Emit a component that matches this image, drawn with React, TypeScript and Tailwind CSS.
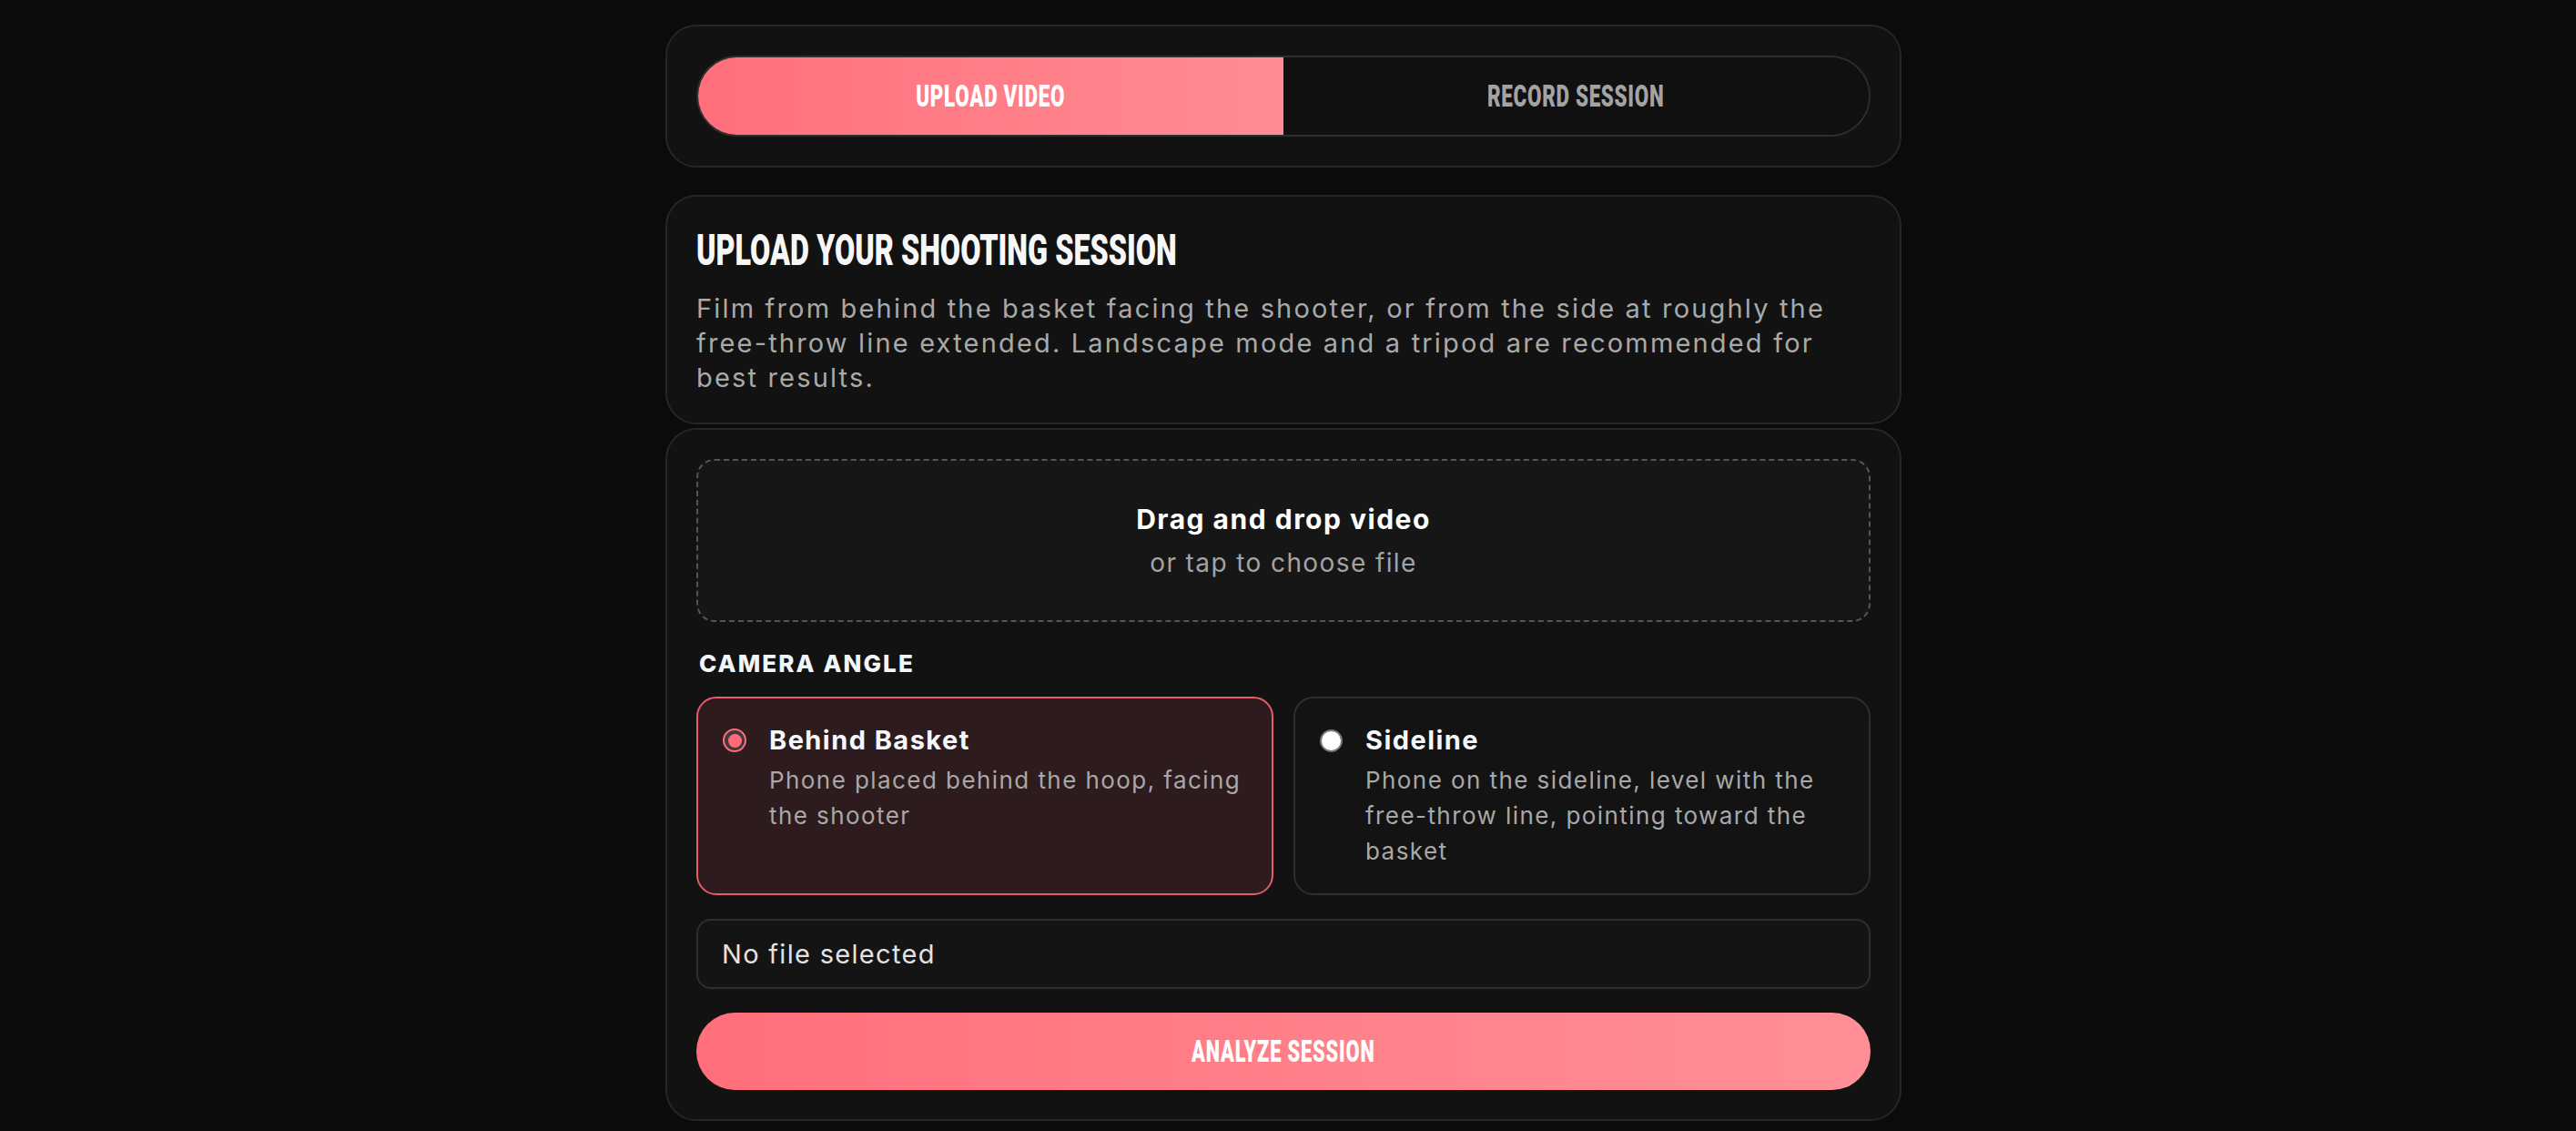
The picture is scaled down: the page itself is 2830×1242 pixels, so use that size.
import React, { useState } from "react";

type Angle = "behind" | "sideline";

const display = "font-['Roboto',sans-serif] font-black uppercase inline-block scale-x-[0.66]";
const body = "font-['Inter','Noto_Sans',sans-serif]";

const angles: { id: Angle; title: string; desc: string }[] = [
  {
    id: "behind",
    title: "Behind Basket",
    desc: "Phone placed behind the hoop, facing the shooter",
  },
  {
    id: "sideline",
    title: "Sideline",
    desc: "Phone on the sideline, level with the free-throw line, pointing toward the basket",
  },
];

const Radio: React.FC<{ checked: boolean }> = ({ checked }) =>
  checked ? (
    <span className="flex h-[26px] w-[26px] shrink-0 items-center justify-center rounded-full border-2 border-[#ff6b7a] bg-[#3a3a3a]">
      <span className="h-[15px] w-[15px] rounded-full bg-[#ff6b7a]" />
    </span>
  ) : (
    <span className="h-[25px] w-[25px] shrink-0 rounded-full border-2 border-[#767676] bg-white" />
  );

export default function App() {
  const [tab, setTab] = useState<"upload" | "record">("upload");
  const [angle, setAngle] = useState<Angle>("behind");

  return (
    <div className={`min-h-screen bg-[#0b0b0b] pt-[27px] pr-[10px] pb-[12px] ${body}`}>
      <div className="mx-auto flex w-[1358px] flex-col">
        {/* Tabs */}
        <div className="rounded-[34px] border-2 border-[#262626] bg-[#121212] p-[32px]">
          <div className="flex h-[89px] overflow-hidden rounded-full border-2 border-[#2e2e2e]">
            <button
              onClick={() => setTab("upload")}
              className={`flex flex-1 items-center justify-center ${
                tab === "upload"
                  ? "bg-gradient-to-r from-[#ff6f7c] to-[#ff8c94] text-white"
                  : "bg-[#101010] text-[#a3a3a3]"
              }`}
            >
              <span className={`${display} text-[34px] tracking-[0.03em]`}>Upload Video</span>
            </button>
            <button
              onClick={() => setTab("record")}
              className={`flex flex-1 items-center justify-center ${
                tab === "record"
                  ? "bg-gradient-to-r from-[#ff6f7c] to-[#ff8c94] text-white"
                  : "bg-[#101010] text-[#a3a3a3]"
              }`}
            >
              <span className={`${display} text-[34px] tracking-[0.03em]`}>Record Session</span>
            </button>
          </div>
        </div>

        {/* Intro */}
        <div className="mt-[30px] rounded-[34px] border-2 border-[#262626] bg-[#121212] px-[32px] pt-[32px] pb-[30px]">
          <h1 className={`${display} origin-left text-[49px] leading-[54px] text-[#f7f7f7]`}>
            Upload your shooting session
          </h1>
          <p className="mt-[18px] text-[29px] leading-[38px] tracking-[0.075em] text-[#a9a9a9]">
            Film from behind the basket facing the shooter, or from the side at roughly the
            free-throw line extended. Landscape mode and a tripod are recommended for best results.
          </p>
        </div>

        {/* Upload form */}
        <div className="mt-[4px] flex flex-col rounded-[34px] border-2 border-[#262626] bg-[#121212] p-[32px]">
          <div className="flex h-[179px] flex-col items-center justify-center gap-[12px] rounded-[20px] border-2 border-dashed border-[#555555] bg-[#161616]">
            <div className="text-[30px] font-bold leading-[36px] tracking-[0.05em] text-white">
              Drag and drop video
            </div>
            <div className="text-[28px] leading-[36px] tracking-[0.05em] text-[#a3a3a3]">
              or tap to choose file
            </div>
          </div>

          <div className="mt-[30px] pl-[3px] text-[26px] font-extrabold leading-[32px] tracking-[0.08em] text-[#f2f5f9]">
            CAMERA ANGLE
          </div>

          <div className="mt-[20px] grid grid-cols-2 gap-[22px]">
            {angles.map((a) => {
              const on = angle === a.id;
              return (
                <button
                  key={a.id}
                  onClick={() => setAngle(a.id)}
                  className={`flex items-start gap-[25px] rounded-[22px] border-2 pt-[28px] pr-[27px] pb-[27px] pl-[27px] text-left ${
                    on ? "border-[#e65c69] bg-[#2d1b1e]" : "border-[#2f2f2f] bg-[#131313]"
                  }`}
                >
                  <span className="flex h-[36px] items-center">
                    <Radio checked={on} />
                  </span>
                  <span className="flex flex-col">
                    <span className="text-[29px] font-bold leading-[36px] tracking-[0.05em] text-[#f5f7fa]">
                      {a.title}
                    </span>
                    <span className="mt-[6px] text-[26px] leading-[39px] tracking-[0.055em] text-[#a8a8a8]">
                      {a.desc}
                    </span>
                  </span>
                </button>
              );
            })}
          </div>

          <div className="mt-[26px] flex h-[77px] items-center rounded-[16px] border-2 border-[#2e2e2e] bg-[#141414] px-[26px] text-[29px] tracking-[0.045em] text-[#e2e2e2]">
            No file selected
          </div>

          <button className="mt-[26px] flex h-[85px] items-center justify-center rounded-full bg-gradient-to-r from-[#ff6f7c] to-[#ff8f97] text-white">
            <span className={`${display} text-[33px] tracking-[0.04em]`}>Analyze Session</span>
          </button>
        </div>
      </div>
    </div>
  );
}
